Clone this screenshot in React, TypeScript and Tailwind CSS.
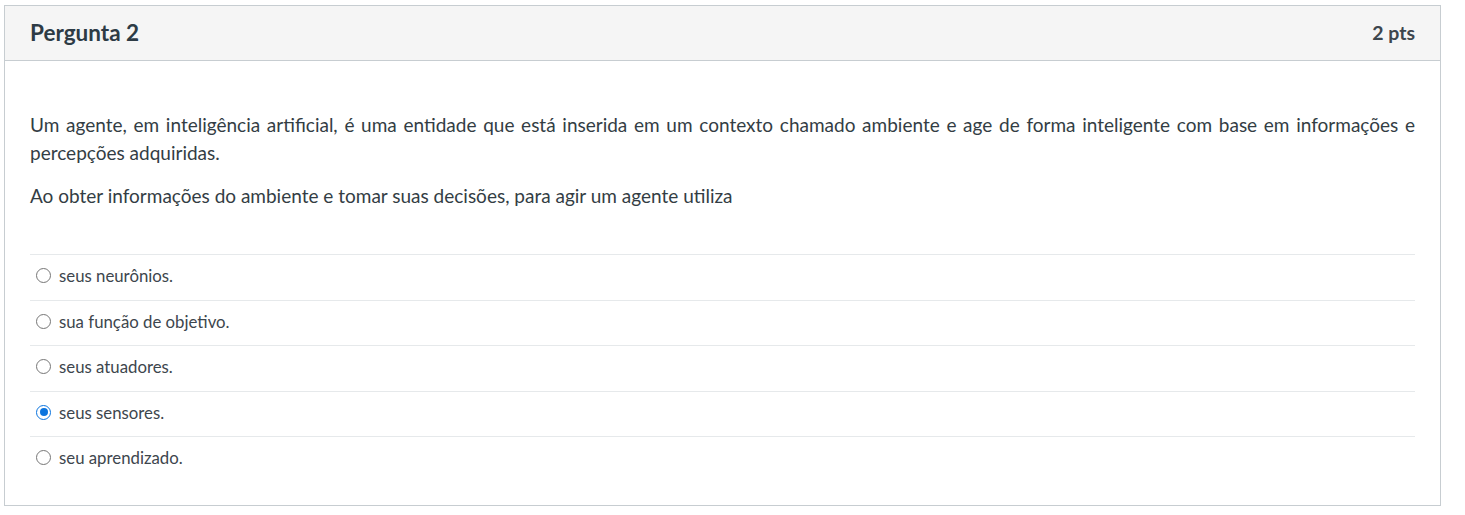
const answers = [
  { label: "seus neurônios.", checked: false },
  { label: "sua função de objetivo.", checked: false },
  { label: "seus atuadores.", checked: false },
  { label: "seus sensores.", checked: true },
  { label: "seu aprendizado.", checked: false },
];

function Radio({ checked }: { checked: boolean }) {
  if (checked) {
    return (
      <span className="flex h-[15px] w-[15px] shrink-0 items-center justify-center rounded-full border-[1.5px] border-[#0b74de] bg-white">
        <span className="h-[8px] w-[8px] rounded-full bg-[#0b74de]" />
      </span>
    );
  }
  return <span className="h-[15px] w-[15px] shrink-0 rounded-full border border-[#767676] bg-white" />;
}

export default function App() {
  return (
    <div className="min-h-[515px] w-[1465px] bg-white pl-[4px] pt-[5px] font-['Lato','Noto_Sans',sans-serif] text-[#2d3b45]">
      <div className="w-[1437px] border border-[#c7cdd1] bg-white">
        {/* Header */}
        <div className="flex h-[55px] items-center justify-between border-b border-[#c7cdd1] bg-[#f5f5f5] px-[25px]">
          <h2 className="text-[22.5px] font-bold text-[#2d3b45]">Pergunta 2</h2>
          <span className="text-[19.5px] font-bold text-[#3d464d]">2 pts</span>
        </div>

        {/* Body */}
        <div className="px-[25px] pb-[23px] pt-[50px]">
          <div className="text-[19px] leading-[28px] text-[#333d44]">
            <p className="text-justify">
              Um agente, em inteligência artificial, é uma entidade que está inserida em um contexto chamado ambiente e age de forma inteligente com base em informações e percepções adquiridas.
            </p>
            <p className="mt-[15px]">
              Ao obter informações do ambiente e tomar suas decisões, para agir um agente utiliza
            </p>
          </div>

          <div className="mt-[44px]">
            {answers.map((a) => (
              <div
                key={a.label}
                className="flex h-[45.5px] items-center gap-[8px] border-t border-[#e6e9eb] pb-[3px] pl-[6px] text-[16.8px] text-[#3d464d]"
              >
                <Radio checked={a.checked} />
                <span>{a.label}</span>
              </div>
            ))}
          </div>
        </div>
      </div>
    </div>
  );
}
